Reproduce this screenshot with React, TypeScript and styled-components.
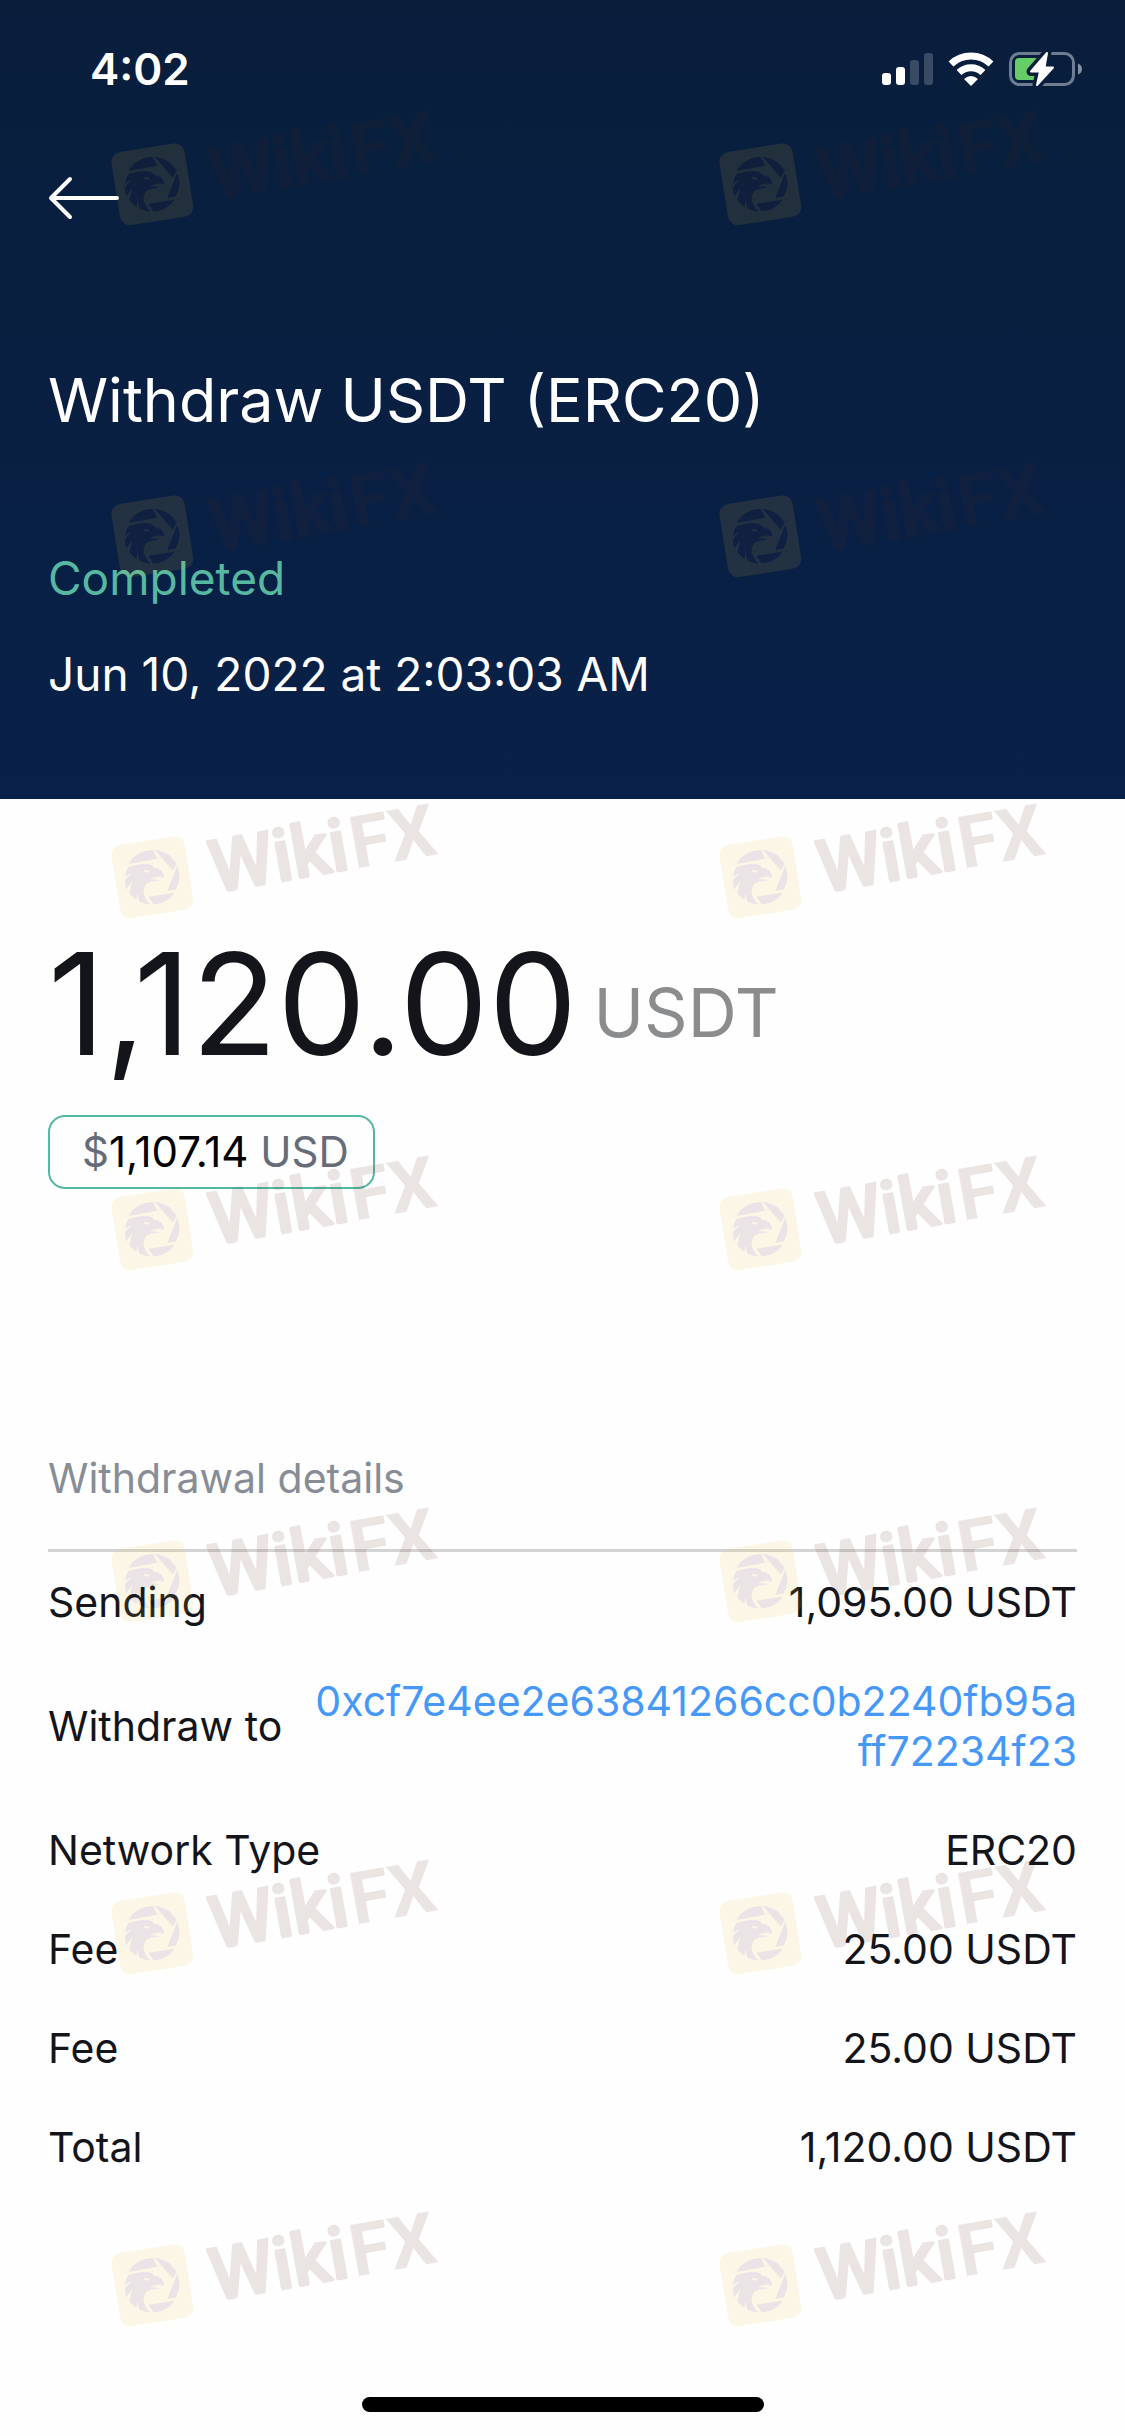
import React from "react";
import styled, { createGlobalStyle } from "styled-components";

const GlobalStyle = createGlobalStyle`
  *, *::before, *::after { box-sizing: border-box; }
  body {
    margin: 0;
    background: #fefefe;
    color: #14151a;
    font-family: Inter, "Liberation Sans", sans-serif;
    font-size: 41px;
    line-height: 50px;
  }
`;

const Screen = styled.div`
  display: flex;
  flex-direction: column;
  min-height: 100vh;
`;

const Header = styled.header`
  position: relative;
  padding: 0 48px 95px;
  color: #fff;
  background: linear-gradient(#081e3b, #092149);
`;

const StatusBar = styled.div`
  display: flex;
  justify-content: space-between;
  align-items: center;
  height: 138px;
  padding-left: 42px;
`;

const Clock = styled.time`
  font-size: 44px;
  font-weight: 600;
`;

const StatusIcons = styled.div`
  display: flex;
  align-items: center;
  gap: 15px;
  margin-right: -6px;
`;

const BackButton = styled.button`
  display: flex;
  align-items: center;
  height: 120px;
  padding: 0;
  border: 0;
  background: none;
  color: inherit;
`;

const Title = styled.h1`
  margin: 102px 0 0;
  font-size: 61px;
  line-height: 80px;
  font-weight: 400;
`;

const Status = styled.p`
  margin: 108px 0 0;
  font-size: 46px;
  line-height: 60px;
  color: #56b8a0;
`;

const DateLine = styled.p`
  margin: 36px 0 0;
  font-size: 46px;
  line-height: 60px;
`;

const Body = styled.main`
  position: relative;
  flex: 1;
  display: flex;
  flex-direction: column;
  padding: 120px 48px 24px;
`;

const Amount = styled.div`
  display: flex;
  align-items: center;
  gap: 16px;
  font-size: 141px;
  line-height: 170px;
`;

const Currency = styled.span`
  margin-top: 16px;
  font-size: 68px;
  line-height: 80px;
  color: #8a8c8e;
`;

const FiatBadge = styled.div`
  align-self: flex-start;
  margin-top: 26px;
  padding: 10px 24px 10px 32px;
  border: 2px solid #54b9a3;
  border-radius: 17px;
  font-size: 42px;
  color: #656c78;
`;

const FiatValue = styled.span`
  color: #000;
`;

const SectionTitle = styled.h2`
  margin: 264px 0 0;
  padding-bottom: 46px;
  border-bottom: 3px solid #d4d4d4;
  font-size: 41px;
  line-height: 50px;
  font-weight: 400;
  color: #878c96;
`;

const Details = styled.dl`
  display: flex;
  flex-direction: column;
  gap: 49px;
  margin: 25px 0 0;
`;

const Row = styled.div`
  display: flex;
  justify-content: space-between;
  align-items: center;
  gap: 28px;
`;

const Label = styled.dt`
  flex: none;
`;

const Value = styled.dd`
  margin: 0;
  text-align: right;
`;

const AddressLink = styled.a`
  color: #4598f7;
  text-decoration: none;
  word-break: break-all;
  font-feature-settings: "calt" 0;
`;

const HomeIndicator = styled.div`
  align-self: center;
  width: 402px;
  height: 15px;
  margin-top: auto;
  border-radius: 8px;
  background: #000;
`;

const MarkLayer = styled.div<{ $top: number }>`
  position: absolute;
  top: ${(p) => p.$top}px;
  left: 100px;
  display: grid;
  grid-template-columns: repeat(2, 350px);
  column-gap: 258px;
  row-gap: 222px;
  pointer-events: none;
`;

const MarkDrawing = styled.svg`
  display: block;
  width: 350px;
  height: 130px;
  overflow: visible;
  opacity: 0.11;
  font-family: Roboto, "Liberation Sans", sans-serif;
`;

function Mark() {
  return (
    <MarkDrawing viewBox="0 0 1050 390">
      <rect x="46" y="121" width="222" height="222" rx="30" fill="#f0bd38" transform="rotate(-9 157 232)" />
      <g fill="#50202e">
        <path d="M86 192Q108 152 158 150L172 176Z" />
        <path d="M164 149Q212 156 230 192L218 212Z" />
        <path d="M231 198Q248 232 226 269L202 272Z" />
        <path d="M146 290 224 278Q200 312 160 313Z" />
        <path d="M76 226Q78 208 88 200 120 190 145 193 160 196 162 204 182 206 188 216 192 224 192 234 184 228 170 230 158 232 150 238 168 236 178 243 156 242 142 250 130 260 131 278 134 298 152 314 130 312 118 304 112 290 112 274L110 300Q96 292 88 280 90 262 98 246 84 256 80 270 74 256 74 244 82 228 96 220 84 222 76 230Z" />
      </g>
      <path d="M132 209 150 212Q142 222 134 215Z" fill="#f0bd38" />
      <g fill="#502418" fontSize="218" transform="rotate(-10)">
        <text x="290" y="334" fontWeight="500" stroke="#502418" strokeWidth="8" strokeLinejoin="round">Wiki</text>
        <text x="716" y="336" fontWeight="700">FX</text>
      </g>
    </MarkDrawing>
  );
}

function Marks({ rows, top }: { rows: number; top: number }) {
  return (
    <MarkLayer $top={top} aria-hidden="true">
      {Array.from({ length: rows * 2 }, (_, i) => (
        <Mark key={i} />
      ))}
    </MarkLayer>
  );
}

function SignalIcon() {
  return (
    <svg width="51" height="34" viewBox="0 0 51 34" fill="#fff">
      <rect x="0" y="21" width="9" height="12" rx="3" />
      <rect x="14" y="15" width="9" height="18" rx="3" />
      <rect x="28" y="8" width="9" height="25" rx="3" opacity=".2" />
      <rect x="42" y="1" width="9" height="32" rx="3" opacity=".2" />
    </svg>
  );
}

function WifiIcon() {
  return (
    <svg width="46" height="34" viewBox="0 0 46 34" fill="none" stroke="#fff">
      <path d="M3 12A29 29 0 0 1 43 12" strokeWidth="7" />
      <path d="M11 20.500A17.500 17.500 0 0 1 35 20.500" strokeWidth="7" />
      <path d="M23 34 16 27Q23 21 30 27Z" fill="#fff" stroke="none" />
    </svg>
  );
}

function BatteryIcon() {
  return (
    <svg width="74" height="36" viewBox="0 0 74 36">
      <rect x="1.500" y="2.500" width="63" height="31" rx="9" fill="none" stroke="#6f7d92" strokeWidth="3" />
      <path d="M69 12.500Q73 14 73 18T69 23.500Z" fill="#8491a3" />
      <path d="M10 7H30V29H10Q6 29 6 25V11Q6 7 10 7Z" fill="#67ce67" />
      <path d="M38 2 22 20.500H31L28 34 44 16.500H35.500Z" fill="#081e3c" stroke="#081e3c" strokeWidth="9" strokeLinejoin="round" />
      <path d="M38 2 22 20.500H31L28 34 44 16.500H35.500Z" fill="#fff" stroke="#fff" strokeWidth="2" strokeLinejoin="round" />
    </svg>
  );
}

const rows: { label: string; value: string; href?: string }[] = [
  { label: "Sending", value: "1,095.00 USDT" },
  { label: "Withdraw to", value: "0xcf7e4ee2e63841266cc0b2240fb95aff72234f23", href: "#address" },
  { label: "Network Type", value: "ERC20" },
  { label: "Fee", value: "25.00 USDT" },
  { label: "Fee", value: "25.00 USDT" },
  { label: "Total", value: "1,120.00 USDT" },
];

export default function App() {
  return (
    <>
      <GlobalStyle />
      <Screen>
        <Header>
          <StatusBar>
            <Clock>4:02</Clock>
            <StatusIcons>
              <SignalIcon />
              <WifiIcon />
              <BatteryIcon />
            </StatusIcons>
          </StatusBar>
          <BackButton aria-label="Back">
            <svg width="72" height="44" viewBox="0 0 72 44" fill="none" stroke="#fff" strokeWidth="4" strokeLinecap="round" strokeLinejoin="round">
              <path d="M69 22H3M22 3 3 22 22 41" />
            </svg>
          </BackButton>
          <Title>Withdraw USDT (ERC20)</Title>
          <Status>Completed</Status>
          <DateLine>Jun 10, 2022 at 2:03:03 AM</DateLine>
          <Marks rows={2} top={107} />
        </Header>
        <Body>
          <Amount>
            1,120.00 <Currency>USDT</Currency>
          </Amount>
          <FiatBadge>
            $<FiatValue>1,107.14</FiatValue> USD
          </FiatBadge>
          <SectionTitle>Withdrawal details</SectionTitle>
          <Details>
            {rows.map((row, i) => (
              <Row key={i}>
                <Label>{row.label}</Label>
                <Value>{row.href ? <AddressLink href={row.href}>{row.value}</AddressLink> : row.value}</Value>
              </Row>
            ))}
          </Details>
          <HomeIndicator />
          <Marks rows={5} top={1} />
        </Body>
      </Screen>
    </>
  );
}
